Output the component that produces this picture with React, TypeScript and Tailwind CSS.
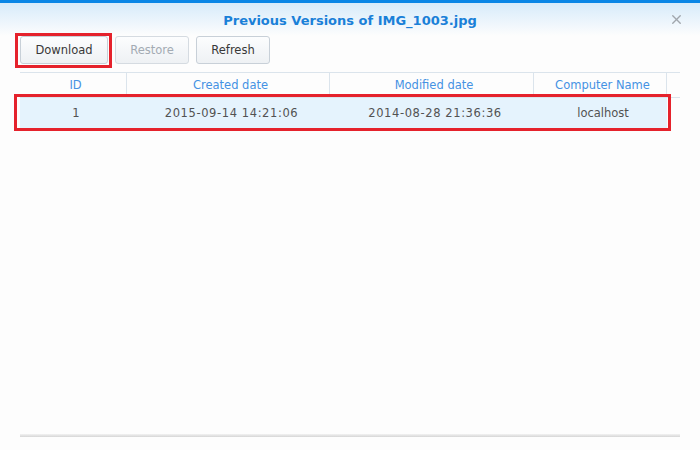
import { X } from "lucide-react";

const columns = [
  { name: "ID", width: "w-[107px]" },
  { name: "Created date", width: "w-[203px]" },
  { name: "Modified date", width: "w-[204px]" },
  { name: "Computer Name", width: "w-[133px]" },
];

const rows = [
  { id: "1", created: "2015-09-14 14:21:06", modified: "2014-08-28 21:36:36", computer: "localhost" },
];

const ToolButton = ({ label, width, disabled }: { label: string; width: string; disabled?: boolean }) => (
  <button
    className={`${width} h-[28px] rounded-[3px] border border-[#c8d0d8] bg-gradient-to-b from-[#fcfdfe] to-[#eef1f4] text-[11.5px] pt-[1px] ${
      disabled ? "text-[#a3abb3] border-[#d5dbe1]" : "text-[#383838]"
    }`}
  >
    {label}
  </button>
);

export default function App() {
  return (
    <div
      className="w-[700px] h-[450px] bg-[#fdfdfd] flex flex-col overflow-hidden"
      style={{ fontFamily: '"DejaVu Sans", Verdana, sans-serif' }}
    >
      <div className="h-[3px] bg-[#0a86e6]" />

      {/* title bar */}
      <div className="h-[33px] bg-gradient-to-b from-[#d7ebfa] to-[#fdfdfd] grid grid-cols-[1fr_auto_1fr] items-center">
        <div />
        <h1 className="text-[13px] font-bold text-[#1a80d8] leading-none mt-[1px]">
          Previous Versions of IMG_1003.jpg
        </h1>
        <div className="flex justify-end pr-[16px]">
          <X size={15} strokeWidth={2.2} className="text-[#a0a6ac]" />
        </div>
      </div>

      {/* toolbar */}
      <div className="flex gap-[7px] px-[20px]">
        <div className="relative">
          <ToolButton label="Download" width="w-[88px]" />
          <div className="absolute -left-[5px] -right-[4px] -top-[3px] -bottom-[4px] border-[3px] border-[#e5222c] pointer-events-none" />
        </div>
        <ToolButton label="Restore" width="w-[74px]" disabled />
        <ToolButton label="Refresh" width="w-[74px]" />
      </div>

      {/* grid */}
      <div className="mx-[20px] mt-[8px] flex-1 flex flex-col">
        <div className="flex h-[26px] border-t border-b border-[#dbe4ec]">
          {columns.map((c) => (
            <div
              key={c.name}
              className={`${c.width} border-r border-[#dbe4ec] flex items-center justify-center pl-[5px] text-[11.5px] pt-[1px] text-[#4592e3]`}
            >
              {c.name}
            </div>
          ))}
          <div className="flex-1" />
        </div>

        {rows.map((r) => (
          <div key={r.id} className="relative w-[647px]">
            <div className="flex h-[30px] bg-[#e5f3fd] text-[11.5px] text-[#525252] pt-[2px]">
              <div className="w-[107px] pl-[5px] flex items-center justify-center">{r.id}</div>
              <div className="w-[203px] pl-[6px] flex items-center justify-center tracking-[0.6px]">{r.created}</div>
              <div className="w-[204px] pl-[6px] flex items-center justify-center tracking-[0.6px]">{r.modified}</div>
              <div className="w-[133px] pl-[5px] flex items-center justify-center">{r.computer}</div>
            </div>
            <div className="absolute -left-[6px] -right-[4px] -top-[4px] -bottom-[3px] border-[3px] border-[#e5222c] pointer-events-none" />
          </div>
        ))}
      </div>

      {/* bottom rule */}
      <div className="mx-[20px] h-[3px] bg-gradient-to-b from-[#f2f2f2] to-[#d6d6d6] mb-[13px]" />
    </div>
  );
}
